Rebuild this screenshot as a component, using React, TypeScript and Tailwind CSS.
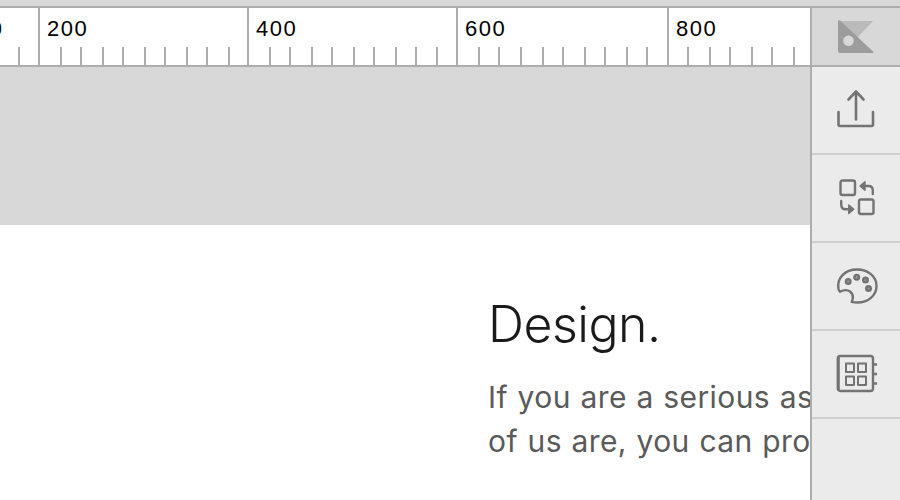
import React from 'react';

interface RulerSegment {
  label: string;
  ticks: number[];
  width: number;
}

// Each number is the distance in px from a tick's left edge to the next one
const SEGMENTS: RulerSegment[] = [
  { label: '200', ticks: [22, 20, 22, 20, 22, 20, 22, 20, 22, 19], width: 209 },
  { label: '400', ticks: [22, 20, 22, 20, 22, 20, 22, 20, 21, 20], width: 209 },
  { label: '600', ticks: [22, 20, 22, 22, 20, 22, 20, 22, 20, 21], width: 211 },
  { label: '800', ticks: [20, 22, 20, 22, 20, 22, 17], width: 143 },
];

function Ruler() {
  return (
    <div className="flex h-[61px] w-full overflow-hidden border-y-2 border-[#adadad] bg-white">
      <div className="relative flex w-[38px] shrink-0 items-end">
        <span className="absolute right-[36px] top-[8px] font-['Liberation_Sans',sans-serif] text-[22px] leading-[26px] text-black">0</span>
        <div className="ml-[18px] h-[18px] w-0.5 bg-[#adadad]" />
      </div>
      {SEGMENTS.map((segment) => (
        <div
          key={segment.label}
          className="flex shrink-0 flex-col justify-between border-l-2 border-[#adadad]"
          style={{ width: segment.width }}
        >
          <span className="pl-[7px] pt-[8px] font-['Liberation_Sans',sans-serif] text-[22px] leading-[26px] tracking-[1.5px] text-black">
            {segment.label}
          </span>
          <div className="-ml-0.5 flex h-[18px]">
            {segment.ticks.map((gap, i) => (
              <div key={i} className="shrink-0 border-l-2 border-[#adadad]" style={{ width: gap }} />
            ))}
          </div>
        </div>
      ))}
    </div>
  );
}

function ExportIcon() {
  return (
    <svg width="44" height="44" viewBox="0 0 44 44" fill="none" stroke="#737373" strokeWidth="2.6" strokeLinecap="round" strokeLinejoin="round">
      <path d="M4.500 24v12.500a1.500 1.500 0 0 0 1.500 1.500h31.500a1.500 1.500 0 0 0 1.500-1.500V24" />
      <path d="M22 31.500V4M14.500 11.500 22 3.500l7.500 8" />
    </svg>
  );
}

function SwapIcon() {
  return (
    <svg width="44" height="44" viewBox="0 0 44 44" fill="none" stroke="#737373" strokeWidth="2.4" strokeLinecap="round" strokeLinejoin="round">
      <rect x="6.500" y="4.500" width="14.500" height="14.500" rx="2" />
      <rect x="25" y="23.500" width="14.500" height="14.500" rx="2" />
      <path d="M28 10h6.500c3 0 4.300 1.700 4.300 4.500v3.500" />
      <path d="m31 5.700-5 4.300 5 4.300z" fill="#737373" strokeWidth="1.400" />
      <path d="M7.200 25v3.500c0 3 1.300 4.800 4.300 4.800h6" />
      <path d="m14.800 29 5 4.300-5 4.200z" fill="#737373" strokeWidth="1.400" />
    </svg>
  );
}

function PaletteIcon() {
  return (
    <svg width="44" height="44" viewBox="0 0 44 44" fill="none" stroke="#737373" strokeWidth="2.4" strokeLinejoin="round">
      <path d="M4.500 25C2.500 14 11 5.500 23 5.500c11 0 19.500 7 19.500 16.500S34 38.500 23.500 38.500c-2 0-4-.2-5.800-.6 1.800-4 1.400-8-1.700-10.400-3-2.200-6.500-1.500-10 .2-.8-.6-1.200-1.600-1.500-2.700Z" />
      <g fill="#999">
        <circle cx="14.200" cy="17.500" r="2.300" />
        <circle cx="22.700" cy="13.200" r="2.300" />
        <circle cx="31.500" cy="16" r="2.300" />
        <circle cx="34.500" cy="24.500" r="2.300" />
      </g>
    </svg>
  );
}

function SymbolsIcon() {
  return (
    <svg width="44" height="44" viewBox="0 0 44 44" fill="none" stroke="#737373" strokeWidth="2.4" strokeLinejoin="round">
      <rect x="3.800" y="4" width="35.200" height="35" rx="2.500" />
      <path d="M4.600 5v33" />
      <g strokeWidth="2">
        <rect x="12" y="11.500" width="8" height="8.500" />
        <rect x="24" y="11.500" width="8" height="8.500" />
        <rect x="12" y="24.500" width="8" height="8.500" />
        <rect x="24" y="24.500" width="8" height="8.500" />
      </g>
      <path d="M39 12.500h4M39 22h4M39 31.500h4" />
    </svg>
  );
}

function Logo() {
  return (
    <svg width="36" height="34" viewBox="0 0 36 34">
      <path d="M1 1h34L19 18z" fill="#bababa" />
      <path fillRule="evenodd" d="M0 1 1.500 0 35.500 32 35 33H1.500L0 31.500zM10.500 15.500a5.300 5.300 0 1 0 0 10.600 5.300 5.300 0 0 0 0-10.600z" fill="#9c9c9c" />
    </svg>
  );
}

const TOOLS = [
  { name: 'export', Icon: ExportIcon },
  { name: 'swap', Icon: SwapIcon },
  { name: 'palette', Icon: PaletteIcon },
  { name: 'symbols', Icon: SymbolsIcon },
];

function Sidebar() {
  return (
    <aside className="flex w-[90px] shrink-0 flex-col border-l-2 border-[#adadad] bg-[#ebebeb]">
      <div className="flex h-[61px] items-center border-y-2 border-[#adadad] bg-[#d8d8d8] pl-[26px]">
        <Logo />
      </div>
      {TOOLS.map(({ name, Icon }) => (
        <button key={name} className="flex h-[88px] w-full items-center border-b-2 border-[#cfcfcf] pl-[22px]">
          <Icon />
        </button>
      ))}
    </aside>
  );
}

export default function App() {
  return (
    <div className="flex h-[500px] w-[900px] flex-col overflow-hidden bg-[#d8d8d8]">
      <div className="h-1.5 shrink-0" />
      <div className="flex min-h-0 flex-1">
        <main className="flex w-[810px] shrink-0 flex-col overflow-hidden">
          <Ruler />
          <div className="h-[158px] shrink-0 bg-[#d8d8d8]" />
          <section className="flex-1 whitespace-nowrap bg-white pl-[488px] pt-[69px] font-['Inter',sans-serif]">
            <h1 className="text-[50px] font-[350] leading-[61px] tracking-[-0.5px] text-[#1a1a1a]">Design.</h1>
            <p className="mt-5 text-[30px] font-normal leading-[44px] tracking-[0.4px] text-[#5a5a5a] [word-spacing:0.8px]">
              If you are a serious as
              <br />
              of us are, you can pro
            </p>
          </section>
        </main>
        <Sidebar />
      </div>
    </div>
  );
}
